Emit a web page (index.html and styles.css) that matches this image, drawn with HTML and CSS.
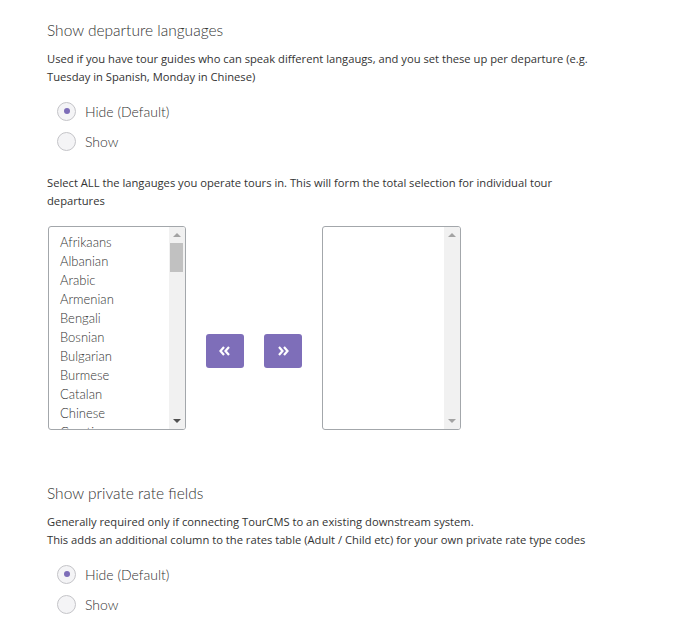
FILE: index.html
```html
<!DOCTYPE html>
<html lang="en">
	<head>
	<meta charset="UTF-8" />
	<meta name="viewport" content="width=device-width, initial-scale=1.0" />
	<title>Tour settings</title>
	<link rel="stylesheet" href="styles.css">
	</head>
	<body>
		<div class="settings">
			<h2 class="setting-title">Show departure languages</h2>
			<p class="setting-help">Used if you have tour guides who can speak different langaugs, and you set these up per departure (e.g. Tuesday in Spanish, Monday in Chinese)</p>
			<div class="radios">
				<label class="radio"><span class="radio-dot checked"></span>Hide (Default)</label>
				<label class="radio"><span class="radio-dot"></span>Show</label>
			</div>

			<p class="setting-help spaced">Select ALL the langauges you operate tours in. This will form the total selection for individual tour departures</p>
			<div class="picker">
				<div class="listbox">
					<div class="options">
						<div class="option">Afrikaans</div>
						<div class="option">Albanian</div>
						<div class="option">Arabic</div>
						<div class="option">Armenian</div>
						<div class="option">Bengali</div>
						<div class="option">Bosnian</div>
						<div class="option">Bulgarian</div>
						<div class="option">Burmese</div>
						<div class="option">Catalan</div>
						<div class="option">Chinese</div>
						<div class="option">Croatian</div>
					</div>
					<div class="scrollbar">
						<span class="arrow up"></span>
						<span class="thumb"></span>
						<span class="arrow down active"></span>
					</div>
				</div>
				<button class="move-btn" title="Remove">
					<svg width="12" height="10" viewBox="0 0 12 10"><path d="M5 1 L1.5 5 L5 9 M10 1 L6.5 5 L10 9" fill="none" stroke="#fff" stroke-width="2.2"/></svg>
				</button>
				<button class="move-btn" title="Add">
					<svg width="12" height="10" viewBox="0 0 12 10"><path d="M2 1 L5.5 5 L2 9 M7 1 L10.5 5 L7 9" fill="none" stroke="#fff" stroke-width="2.2"/></svg>
				</button>
				<div class="listbox wide">
					<div class="options"></div>
					<div class="scrollbar">
						<span class="arrow up"></span>
						<span class="arrow down"></span>
					</div>
				</div>
			</div>

			<h2 class="setting-title second">Show private rate fields</h2>
			<p class="setting-help">Generally required only if connecting TourCMS to an existing downstream system.<br>This adds an additional column to the rates table (Adult / Child etc) for your own private rate type codes</p>
			<div class="radios">
				<label class="radio"><span class="radio-dot checked"></span>Hide (Default)</label>
				<label class="radio"><span class="radio-dot"></span>Show</label>
			</div>
		</div>
	</body>
</html>
```

FILE: styles.css
```css
* {
	margin: 0;
	padding: 0;
	box-sizing: border-box;
}

body {
	background: #fff;
	color: #333;
	font-family: Lato, sans-serif;
}

.settings {
	padding: 20px 0 0 47px;
}

.setting-title {
	font-size: 15.5px;
	font-weight: 300;
	line-height: 20px;
	color: #333;
}

.setting-title.second {
	margin-top: 53px;
}

.setting-help {
	margin-top: 10px;
	font-family: 'Open Sans', sans-serif;
	font-size: 11.2px;
	line-height: 18px;
	color: #333;
	max-width: 550px;
}

.setting-help.spaced {
	margin-top: 18px;
}

.radios {
	margin-top: 10px;
	padding-left: 10px;
}

.radio {
	display: flex;
	align-items: center;
	height: 30px;
	font-size: 14px;
	font-weight: 300;
	color: #333;
}

.radio-dot {
	width: 19px;
	height: 19px;
	border: 1px solid #c4c4c8;
	border-radius: 50%;
	background: #f4f4f6;
	margin-right: 9px;
	display: flex;
	align-items: center;
	justify-content: center;
}

.radio-dot.checked:after {
	content: '';
	width: 6px;
	height: 6px;
	border-radius: 50%;
	background: #7d6db8;
}

.picker {
	margin-top: 16px;
	margin-left: 1px;
	display: flex;
	align-items: flex-start;
	gap: 20px;
}

.listbox {
	width: 138px;
	height: 204px;
	border: 1px solid #a3a7ab;
	border-radius: 3px;
	display: flex;
	overflow: hidden;
}

.listbox.wide {
	width: 139px;
}

.options {
	flex: 1;
	overflow: hidden;
	padding: 6px 0 0 11px;
}

.option {
	font-size: 13px;
	font-weight: 300;
	line-height: 19px;
	color: #333;
	white-space: nowrap;
}

.scrollbar {
	width: 16px;
	background: #f1f1f1;
	position: relative;
}

.arrow {
	position: absolute;
	left: 4px;
	width: 0;
	height: 0;
	border-left: 4px solid transparent;
	border-right: 4px solid transparent;
}

.arrow.up {
	top: 6px;
	border-bottom: 4px solid #a3a3a3;
}

.arrow.down {
	bottom: 6px;
	border-top: 4px solid #a3a3a3;
}

.arrow.down.active {
	border-top-color: #505050;
}

.thumb {
	position: absolute;
	top: 16px;
	left: 1px;
	width: 13px;
	height: 29px;
	background: #c1c1c1;
}

.move-btn {
	margin-top: 108px;
	width: 38px;
	height: 34px;
	border: none;
	border-radius: 3px;
	background: #7e6eb9;
	display: flex;
	align-items: center;
	justify-content: center;
}
```
